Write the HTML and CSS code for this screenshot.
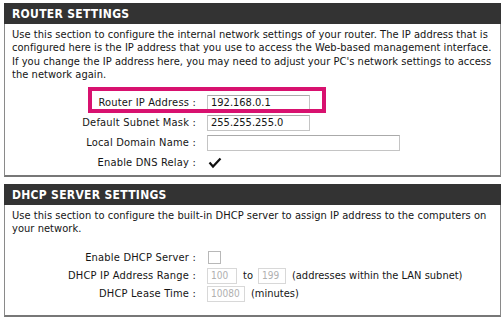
FILE: index.html
```html
<!DOCTYPE html>
<html>
<head>
<meta charset="utf-8">
<link rel="stylesheet" href="styles.css">
</head>
<body>
<div class="section router">
  <div class="hdr">ROUTER SETTINGS</div>
  <p class="desc">Use this section to configure the internal network settings of your router. The IP address that is configured here is the IP address that you use to access the Web-based management interface. If you change the IP address here, you may need to adjust your PC's network settings to access the network again.</p>
  <div class="form">
    <label>Router IP Address :</label>
    <div class="field"><span class="inp w103">192.168.0.1</span></div>
    <label>Default Subnet Mask :</label>
    <div class="field"><span class="inp w103">255.255.255.0</span></div>
    <label>Local Domain Name :</label>
    <div class="field"><span class="inp w193"></span></div>
    <label>Enable DNS Relay :</label>
    <div class="field"><svg class="check" width="14" height="12" viewBox="0 0 14 12"><path d="M1.5 5.5 L5 9.5 L12.5 1.5" fill="none" stroke="#111" stroke-width="2.2"/></svg></div>
  </div>
  <div class="highlight"></div>
</div>
<div class="section dhcp">
  <div class="hdr">DHCP SERVER SETTINGS</div>
  <p class="desc">Use this section to configure the built-in DHCP server to assign IP address to the computers on your network.</p>
  <div class="form form2">
    <label>Enable DHCP Server :</label>
    <div class="field"><span class="box"></span></div>
    <label>DHCP IP Address Range :</label>
    <div class="field"><span class="inp dis w30">100</span><span class="txt">to</span><span class="inp dis w28">199</span><span class="txt">(addresses within the LAN subnet)</span></div>
    <label>DHCP Lease Time :</label>
    <div class="field"><span class="inp dis w38">10080</span><span class="txt">(minutes)</span></div>
  </div>
</div>
</body>
</html>
```
FILE: styles.css
```css
html, body {
  margin: 0;
  padding: 0;
  background: #fff;
}
body {
  padding: 3px 3px 0 4px;
  font-family: "DejaVu Sans Condensed", "DejaVu Sans", sans-serif;
  font-size: 11px;
  color: #151515;
}
.section {
  position: relative;
  border: 1px solid #8a8a8a;
  border-bottom: 2px solid #777;
  border-top: none;
}
.router {
  height: 172px;
}
.dhcp {
  margin-top: 7px;
  height: 131px;
}
.hdr {
  background: #333;
  color: #fff;
  font-weight: bold;
  font-size: 12px;
  letter-spacing: 0.3px;
  height: 21px;
  line-height: 23px;
  padding-left: 8px;
  margin: 0 -1px;
}
.desc {
  margin: 0;
  padding: 4px 6px 0 7px;
  line-height: 13.3px;
  letter-spacing: 0.05px;
}
.form {
  display: grid;
  grid-template-columns: 191px auto;
  column-gap: 11px;
  row-gap: 4px;
  margin-top: 14px;
}
.form2 {
  margin-top: 14px;
  row-gap: 2px;
}
.form label {
  text-align: right;
  height: 16px;
  line-height: 16px;
  white-space: nowrap;
  letter-spacing: 0.2px;
}
.field {
  display: flex;
  align-items: center;
  height: 16px;
}
.inp {
  box-sizing: border-box;
  display: inline-block;
  height: 16px;
  line-height: 14px;
  border: 1px solid #c4c4c4;
  border-top-color: #aaa;
  padding: 0 3px;
  background: #fff;
  white-space: nowrap;
  font-size: 11px;
}
.w103 { width: 103px; }
.w193 { width: 193px; }
.w30 { width: 30px; }
.w28 { width: 28px; }
.w38 { width: 38px; }
.dis {
  color: #b0b0b0;
  border-color: #d8d8d8;
  font-size: 10px;
}
.txt {
  margin: 0 5px 0 6px;
}
.box {
  display: inline-block;
  width: 11px;
  height: 11px;
  border: 1px solid #b8b8b8;
  margin-left: 1px;
}
.check {
  margin-left: 1px;
}
.highlight {
  position: absolute;
  left: 83px;
  top: 84px;
  width: 230px;
  height: 18px;
  border: 4px solid #d8116f;
}
```
